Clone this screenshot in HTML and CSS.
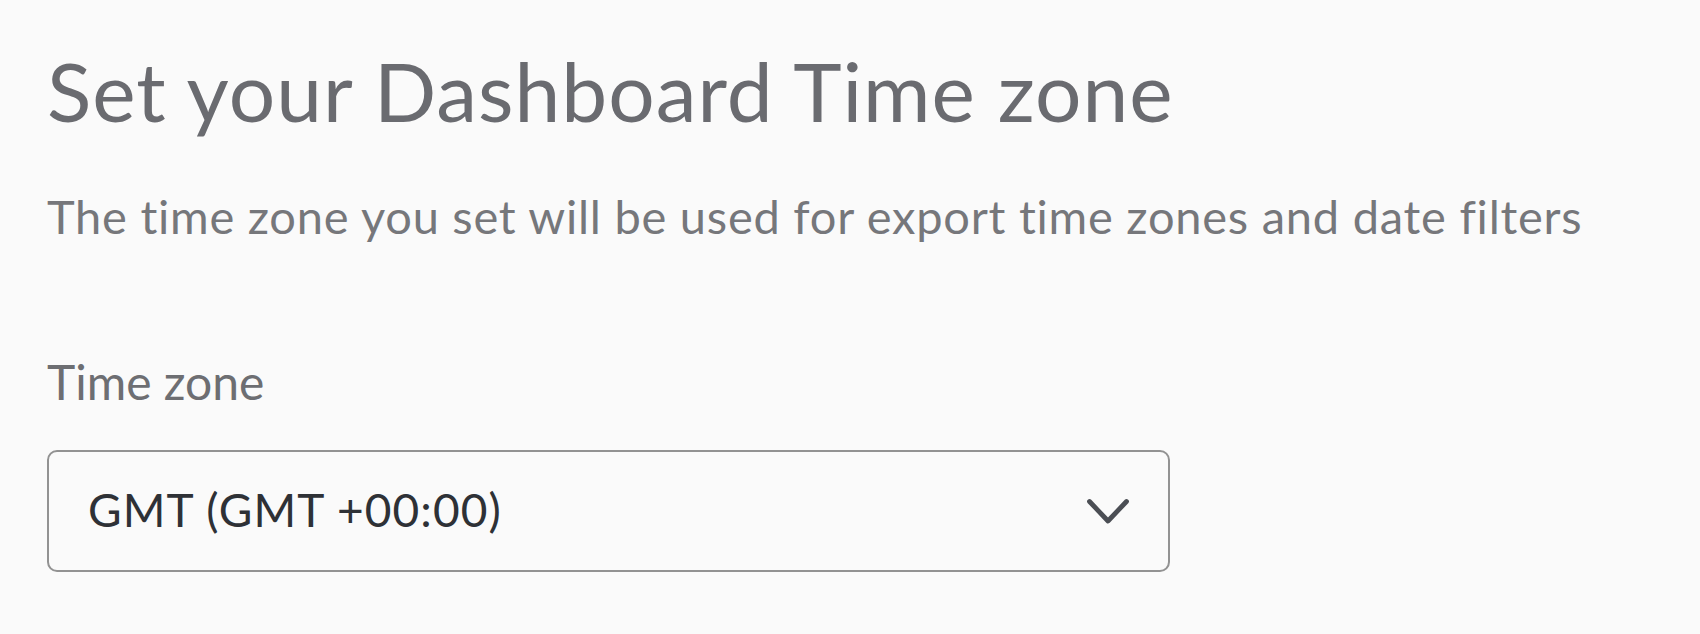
FILE: index.html
```html
<!DOCTYPE html>
<html lang="en">
<head>
	<meta charset="UTF-8">
	<title>Dashboard time zone</title>
	<link rel="stylesheet" href="styles.css">
</head>
<body>
	<div class="settings">
		<h1 class="title">Set your Dashboard Time zone</h1>
		<p class="hint">The time zone you set will be used for export time zones and date filters</p>
		<label class="field-label" for="tz">Time zone</label>
		<div class="select" id="tz">
			<span class="select-value">GMT (GMT +00:00)</span>
			<svg class="chevron" width="44" height="27" viewBox="0 0 44 27">
				<polyline points="3.5,3.5 22,23 40.5,3.5" fill="none" stroke="#4b4e54" stroke-width="4.8" stroke-linecap="round" stroke-linejoin="round"/>
			</svg>
		</div>
	</div>
</body>
</html>
```

FILE: styles.css
```css
html, body {
	margin: 0;
	padding: 0;
	background: #fafafa;
	font-family: Lato, "Open Sans", sans-serif;
}
.settings {
	padding: 41px 47px;
	width: 1123px;
}
.title {
	margin: 0;
	font-size: 82px;
	line-height: 98px;
	font-weight: 400;
	letter-spacing: 1px;
	color: #6a6b70;
	white-space: nowrap;
}
.hint {
	margin: 49px 0 0;
	font-size: 47px;
	line-height: 56px;
	letter-spacing: 0.75px;
	color: #76777b;
	white-space: nowrap;
}
.field-label {
	display: block;
	margin-top: 110px;
	font-size: 48px;
	line-height: 56px;
	color: #6d6e72;
}
.select {
	display: flex;
	align-items: center;
	justify-content: space-between;
	box-sizing: border-box;
	height: 122px;
	margin-top: 40px;
	padding: 0 38px 0 39px;
	border: 2px solid #929292;
	border-radius: 10px;
}
.select-value {
	font-size: 46px;
	line-height: 46px;
	letter-spacing: 1.1px;
	color: #2e3136;
	padding-bottom: 2px;
}
.chevron {
	display: block;
}
```
